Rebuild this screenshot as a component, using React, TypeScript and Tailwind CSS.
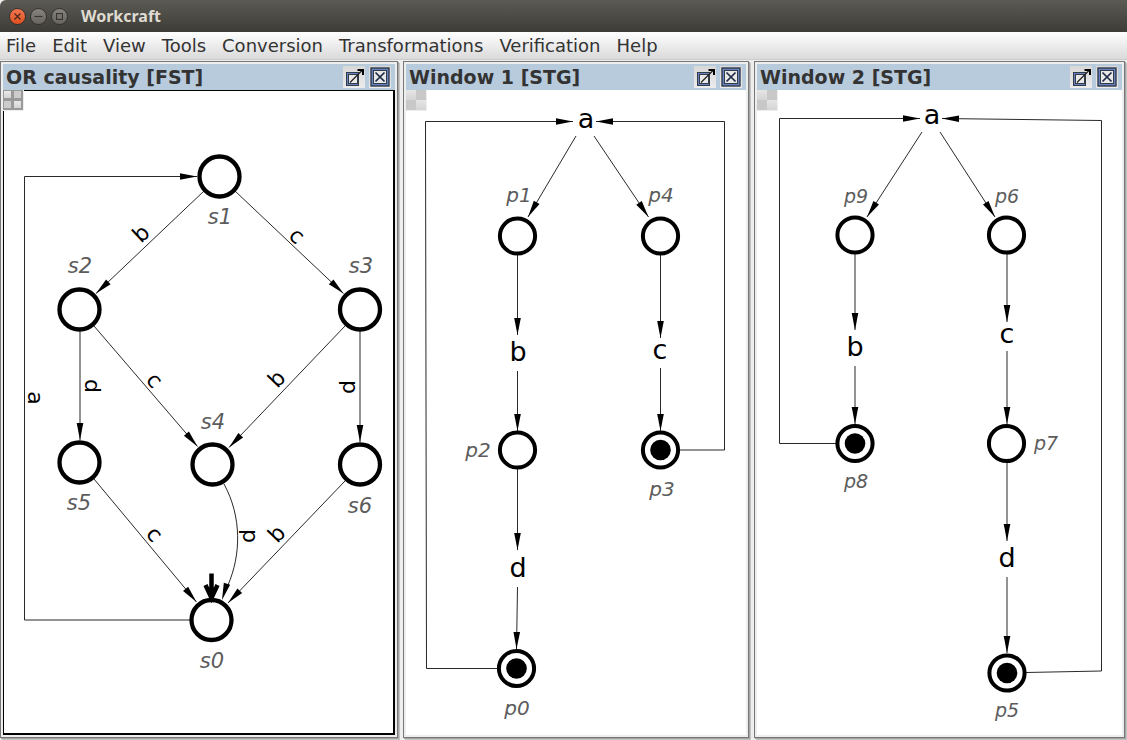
import React from "react";

type Point = [number, number];

const menus = ["File", "Edit", "View", "Tools", "Conversion", "Transformations", "Verification", "Help"];

const dejavu = "font-['DejaVu_Sans',sans-serif]";

/** Polyline connection whose last segment ends with a slim arrow head. */
function Arc({ points }: { points: Point[] }) {
  const end = points[points.length - 1];
  const prev = points[points.length - 2];
  const angle = (Math.atan2(end[1] - prev[1], end[0] - prev[0]) * 180) / Math.PI;
  return (
    <g>
      <polyline points={points.map((p) => p.join(",")).join(" ")} fill="none" stroke="#111" strokeWidth="0.9" />
      <ArrowHead at={end} angle={angle} />
    </g>
  );
}

function ArrowHead({ at, angle }: { at: Point; angle: number }) {
  return <path d="M0 0L-17 -3.3V3.3Z" fill="#000" transform={`translate(${at[0]} ${at[1]}) rotate(${angle})`} />;
}

function State({ x, y }: { x: number; y: number }) {
  return <circle cx={x} cy={y} r="20" fill="#fff" stroke="#000" strokeWidth="4.3" />;
}

function Place({ x, y, token = false }: { x: number; y: number; token?: boolean }) {
  return (
    <g>
      <circle cx={x} cy={y} r="17.6" fill="#fff" stroke="#000" strokeWidth="4" />
      {token && <circle cx={x} cy={y} r="10.3" fill="#000" />}
    </g>
  );
}

function Name({ x, y, size = 20, children }: { x: number; y: number; size?: number; children: string }) {
  return (
    <text x={x} y={y} fontSize={size} fontStyle="italic" fill="#5c5c5c" textAnchor="middle">
      {children}
    </text>
  );
}

function Signal({ x, y, children }: { x: number; y: number; children: string }) {
  return (
    <text x={x} y={y} fontSize="27" fill="#000" textAnchor="middle">
      {children}
    </text>
  );
}

/** Event letter laid along its arc; x and y are the middle of its baseline. */
function Event({ x, y, angle, children }: { x: number; y: number; angle: number; children: string }) {
  return (
    <text fontSize="22" fill="#000" textAnchor="middle" transform={`translate(${x} ${y}) rotate(${angle})`}>
      {children}
    </text>
  );
}

function Diagram({ box, label, children }: { box: string; label: string; children: React.ReactNode }) {
  return (
    <svg
      viewBox={box}
      preserveAspectRatio="xMinYMin meet"
      role="img"
      aria-label={label}
      className={`block h-full w-full ${dejavu}`}
    >
      {children}
    </svg>
  );
}

function OrCausality() {
  return (
    <Diagram box="4 91 389 642" label="OR causality">
      <Arc points={[[191, 620], [24.5, 620], [24.5, 176.5], [197, 176.5]]} />
      <Arc points={[[204, 191], [96, 293.5]]} />
      <Arc points={[[235, 191], [343.5, 293.5]]} />
      <Arc points={[[80, 331], [80, 440]]} />
      <Arc points={[[94, 326], [197.5, 446.5]]} />
      <Arc points={[[345, 326], [229, 447.5]]} />
      <Arc points={[[360, 331], [360, 442]]} />
      <Arc points={[[94, 479], [196.5, 602]]} />
      <Arc points={[[345, 481], [228, 603]]} />
      <path d="M224 484C242 517 241 555 228 585" fill="none" stroke="#111" strokeWidth="0.9" />
      <ArrowHead at={[222, 600]} angle={107} />

      <State x={219.5} y={176.5} />
      <State x={79.5} y={309.5} />
      <State x={360} y={309.5} />
      <State x={79.5} y={462.5} />
      <State x={212.5} y={464.5} />
      <State x={360} y={464.5} />
      <State x={211.5} y={620} />
      <path d="M211.5 573.5V599M205.5 585L211.5 598L217.5 585" fill="none" stroke="#000" strokeWidth="4.5" />

      <Name x={220} y={224} size={21}>s1</Name>
      <Name x={80} y={273} size={21}>s2</Name>
      <Name x={361} y={273} size={21}>s3</Name>
      <Name x={213} y={429} size={21}>s4</Name>
      <Name x={79} y={510} size={21}>s5</Name>
      <Name x={360} y={513} size={21}>s6</Name>
      <Name x={212} y={668} size={21}>s0</Name>

      <Event x={146} y={239} angle={-43}>b</Event>
      <Event x={292} y={241} angle={43}>c</Event>
      <Event x={85} y={386} angle={90}>d</Event>
      <Event x={149} y={385} angle={49}>c</Event>
      <Event x={282} y={384} angle={-46}>b</Event>
      <Event x={355} y={387} angle={-90}>d</Event>
      <Event x={28} y={398} angle={90}>a</Event>
      <Event x={149} y={539} angle={50}>c</Event>
      <Event x={255} y={536} angle={-90}>d</Event>
      <Event x={282} y={539} angle={-46}>b</Event>
    </Diagram>
  );
}

function StgOne() {
  return (
    <Diagram box="406 90 340 645" label="Window 1">
      <Arc points={[[498, 668.5], [426.5, 668.5], [425.5, 121.5], [573, 121.5]]} />
      <Arc points={[[680, 450], [724.5, 450], [724.5, 121.5], [596, 121.5]]} />
      <Arc points={[[576, 136], [528, 217]]} />
      <Arc points={[[594, 136], [648.5, 217]]} />
      <Arc points={[[517.5, 254], [517.5, 335]]} />
      <Arc points={[[517.5, 371], [517.5, 431]]} />
      <Arc points={[[517.5, 469], [517.5, 550]]} />
      <Arc points={[[517.5, 587], [516.5, 649]]} />
      <Arc points={[[660.5, 254], [660.5, 338]]} />
      <Arc points={[[660.5, 368], [660.5, 431]]} />

      <Place x={517.5} y={236} />
      <Place x={660.5} y={236} />
      <Place x={517.5} y={450} />
      <Place x={660.5} y={450} token />
      <Place x={516.5} y={668.5} token />

      <Signal x={586} y={128}>a</Signal>
      <Signal x={518} y={361}>b</Signal>
      <Signal x={660} y={359}>c</Signal>
      <Signal x={518} y={577}>d</Signal>

      <Name x={519} y={202}>p1</Name>
      <Name x={661} y={202}>p4</Name>
      <Name x={478} y={457}>p2</Name>
      <Name x={662} y={496}>p3</Name>
      <Name x={517} y={715}>p0</Name>
    </Diagram>
  );
}

function StgTwo() {
  return (
    <Diagram box="757 90 365 645" label="Window 2">
      <Arc points={[[836, 443.5], [779.5, 443.5], [779.5, 118.5], [920, 118.5]]} />
      <Arc points={[[1026, 672.5], [1101.5, 671], [1101.5, 120.5], [942, 118.5]]} />
      <Arc points={[[922, 132], [867, 217]]} />
      <Arc points={[[940, 132], [995, 217]]} />
      <Arc points={[[855, 254], [855, 330]]} />
      <Arc points={[[855, 366], [855, 424]]} />
      <Arc points={[[1007, 254], [1007, 322]]} />
      <Arc points={[[1007, 351], [1007, 424]]} />
      <Arc points={[[1007, 463], [1007, 541]]} />
      <Arc points={[[1007, 577], [1007, 653]]} />

      <Place x={855} y={235} />
      <Place x={1006.5} y={235} />
      <Place x={855} y={443.5} token />
      <Place x={1006.5} y={443.5} />
      <Place x={1007} y={673} token />

      <Signal x={932} y={124}>a</Signal>
      <Signal x={855} y={356}>b</Signal>
      <Signal x={1007} y={343}>c</Signal>
      <Signal x={1007} y={567}>d</Signal>

      <Name x={856} y={203} size={19}>p9</Name>
      <Name x={1007} y={203} size={19}>p6</Name>
      <Name x={856} y={488} size={19}>p8</Name>
      <Name x={1046} y={450} size={19}>p7</Name>
      <Name x={1007} y={717} size={19}>p5</Name>
    </Diagram>
  );
}

function DetachIcon() {
  return (
    <svg width="22" height="22" viewBox="0 0 22 22" aria-hidden="true">
      <rect x="3.5" y="6.5" width="12" height="13" fill="#6382bf" stroke="#333a48" />
      <rect x="5.5" y="8.5" width="9" height="9" fill="#e8e8e8" stroke="#333a48" />
      <path d="M7 16.5L19.500 4" stroke="#222" strokeWidth="1.300" />
      <path d="M14.500 4H20V9" fill="none" stroke="#000" strokeWidth="2" />
    </svg>
  );
}

function CloseIcon() {
  return (
    <svg width="22" height="22" viewBox="0 0 22 22" aria-hidden="true">
      <rect x="2" y="2" width="18" height="18" fill="#6382bf" stroke="#333a48" strokeWidth="1.400" />
      <rect x="4.500" y="4.500" width="13" height="13" fill="#e8e8e8" stroke="#333a48" />
      <path d="M6.500 6.500L15.500 15.500M15.500 6.500L6.500 15.500" stroke="#1c2a44" strokeWidth="1.700" />
    </svg>
  );
}

interface WindowProps {
  title: string;
  active?: boolean;
  className: string;
  children: React.ReactNode;
}

function EditorWindow({ title, active = false, className, children }: WindowProps) {
  return (
    <section
      className={`flex min-w-0 flex-col border border-[#777] bg-[#eee] p-0.5 shadow-[1px_1px_0_#a5a5a5,2px_2px_0_#c4c4c4] ${className}`}
    >
      <header className="flex h-[26px] shrink-0 items-center justify-between bg-[#b8cbdc] pr-1 pl-[3px]">
        <h2 className={`truncate text-[19px] leading-6 font-bold text-[#333] ${dejavu}`}>{title}</h2>
        <div className="flex shrink-0 gap-1">
          <button type="button" aria-label={`Detach ${title}`} className="size-[22px] bg-linear-to-b from-[#d8d8d8] to-[#ececec]">
            <DetachIcon />
          </button>
          <button type="button" aria-label={`Close ${title}`} className="size-[22px] bg-linear-to-b from-[#d8d8d8] to-[#ececec]">
            <CloseIcon />
          </button>
        </div>
      </header>
      <div
        className={`relative min-h-0 flex-1 bg-white ${active ? "border-t border-r-2 border-b-2 border-l border-black" : ""}`}
      >
        {children}
        {active ? (
          <button
            type="button"
            aria-label="Rulers and grid"
            className="absolute -top-px -left-px grid size-[21px] grid-cols-2 gap-[3px] border-r border-b border-[#eee] bg-[#999] p-px pr-0.5 pb-0.5"
          >
            <span className="h-full bg-linear-to-b from-[#eaeaea] to-[#d4d4d4]" />
            <span className="h-full bg-[#ccc]" />
            <span className="h-full bg-[#ccc]" />
            <span className="h-full bg-linear-to-b from-[#eaeaea] to-[#d4d4d4]" />
          </button>
        ) : (
          <button
            type="button"
            aria-label="Rulers and grid"
            className="absolute top-0 left-0 grid size-[21px] grid-cols-2 border-r border-b border-[#eee] bg-[#ccc]"
          >
            <span className="h-full bg-linear-to-b from-[#e6e6e6] to-[#d4d4d4]" />
            <span className="h-full bg-[#c8c8c8]" />
            <span className="h-full bg-[#c8c8c8]" />
            <span className="h-full bg-linear-to-b from-[#e6e6e6] to-[#d4d4d4]" />
          </button>
        )}
      </div>
    </section>
  );
}

function TitleBar() {
  const button = "flex size-[17px] items-center justify-center rounded-full border border-[#32312c]";
  return (
    <header className="flex h-8 shrink-0 items-center rounded-tl-md bg-linear-to-b from-[#5b5a53] to-[#3d3c37] pl-[9px]">
      <div className="flex gap-1">
        <button type="button" aria-label="Close" className={`${button} bg-linear-to-b from-[#f4764e] to-[#e0501f]`}>
          <svg width="7" height="7" viewBox="0 0 7 7" aria-hidden="true">
            <path d="M0.500 0.500L6.500 6.500M6.500 0.500L0.500 6.500" stroke="#4a2a1c" strokeWidth="1.300" />
          </svg>
        </button>
        <button type="button" aria-label="Minimize" className={`${button} bg-linear-to-b from-[#85837b] to-[#67655e]`}>
          <svg width="9" height="7" viewBox="0 0 9 7" aria-hidden="true">
            <path d="M0.500 3.500H8.500" stroke="#36352f" strokeWidth="1.200" />
          </svg>
        </button>
        <button type="button" aria-label="Maximize" className={`${button} bg-linear-to-b from-[#85837b] to-[#67655e]`}>
          <svg width="7" height="7" viewBox="0 0 7 7" aria-hidden="true">
            <rect x="0.500" y="0.500" width="6" height="6" fill="none" stroke="#36352f" strokeWidth="1.200" />
          </svg>
        </button>
      </div>
      <h1 className="ml-[13px] font-['Noto_Sans',sans-serif] text-base leading-6 font-bold text-[#dfdbd2]">Workcraft</h1>
    </header>
  );
}

export default function App() {
  return (
    <div className="flex h-screen min-h-[400px] flex-col bg-[#eee]">
      <TitleBar />
      <nav
        aria-label="Main menu"
        className="flex h-[28px] shrink-0 items-center gap-4 border-b border-[#ccc] bg-linear-to-b from-white to-[#dadada] pl-[6px]"
      >
        {menus.map((menu) => (
          <button key={menu} type="button" className={`text-[18px] leading-6 text-[#333] ${dejavu}`}>
            {menu}
          </button>
        ))}
      </nav>
      <main className="flex min-h-0 flex-1 gap-[5px] pt-px pr-0.5 pb-0.5">
        <EditorWindow title="OR causality [FST]" active className="flex-[392_392_0%]">
          <OrCausality />
        </EditorWindow>
        <EditorWindow title="Window 1 [STG]" className="flex-[340_340_0%]">
          <StgOne />
        </EditorWindow>
        <EditorWindow title="Window 2 [STG]" className="flex-[365_365_0%]">
          <StgTwo />
        </EditorWindow>
      </main>
    </div>
  );
}
